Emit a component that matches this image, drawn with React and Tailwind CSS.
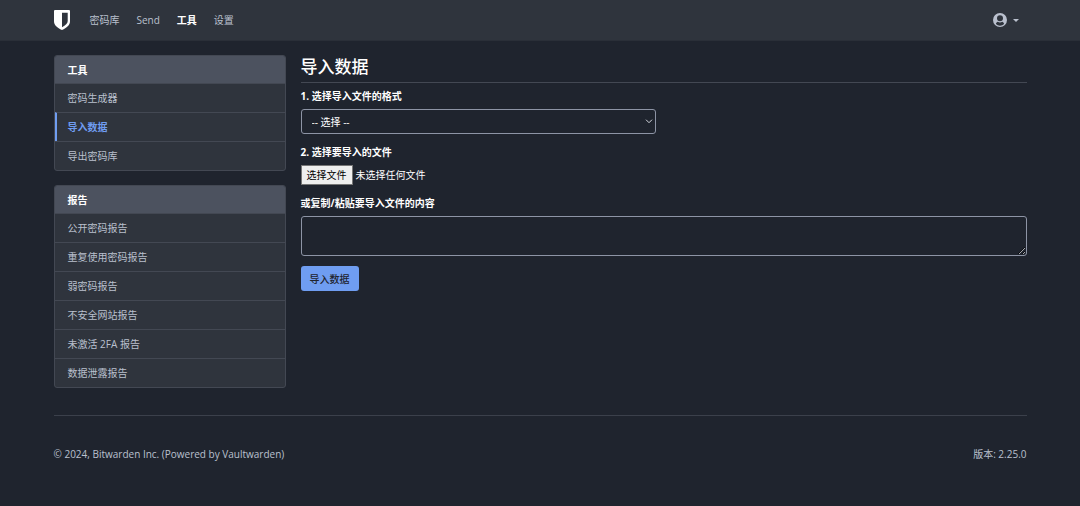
import React, { useRef, useState } from 'react';

const navLinks = ['密码库', 'Send', '工具', '设置'];

const toolLinks = ['密码生成器', '导入数据', '导出密码库'];

const reportLinks = [
  '公开密码报告',
  '重复使用密码报告',
  '弱密码报告',
  '不安全网站报告',
  '未激活 2FA 报告',
  '数据泄露报告',
];

function Logo() {
  return (
    <svg viewBox="0 0 16 20" className="w-4 h-5" fill="#fff" aria-hidden="true">
      <path
        fillRule="evenodd"
        d="M1 0h14a1 1 0 0 1 1 1v10.2c0 3.9-3.3 6.7-8 8.8-4.7-2.1-8-4.9-8-8.8V1a1 1 0 0 1 1-1zM8 2.8v14.4c3.6-1.9 5.7-3.7 5.7-6.2V2.8z"
      />
    </svg>
  );
}

function UserIcon() {
  return (
    <svg viewBox="0 0 14 14" className="w-3.5 h-3.5" aria-hidden="true">
      <path
        fill="currentColor"
        fillRule="evenodd"
        d="M7 0a7 7 0 1 1 0 14A7 7 0 0 1 7 0zM7 2.2a3 3 0 1 0 0 6 3 3 0 0 0 0-6zM2.900 10.900a5.700 5.700 0 0 0 8.200 0c-.4-1.200-1-1.900-1.900-2.100a4.300 4.300 0 0 1-4.400 0c-.9.2-1.500.9-1.900 2.100z"
      />
    </svg>
  );
}

function Navbar() {
  return (
    <header className="bg-[#2f343d] border-b border-[#2a2f38] text-[#bac0ce]">
      <div className="flex items-center justify-between w-full max-w-[973px] h-10 mx-auto">
        <div className="flex items-center">
          <a href="#" aria-label="Bitwarden" className="mr-5"><Logo /></a>
          <nav className="flex items-center gap-[17px]">
            {navLinks.map((label) => (
              <a key={label} href="#" className={label === '工具' ? 'font-bold text-white' : 'hover:text-white'}>{label}</a>
            ))}
          </nav>
        </div>
        <button type="button" aria-label="账户" className="flex items-center gap-1.5 mr-2">
          <UserIcon />
          <svg viewBox="0 0 6 3" className="w-1.5 h-[3px]" fill="currentColor" aria-hidden="true"><path d="M0 0h6L3 3z" /></svg>
        </button>
      </div>
    </header>
  );
}

function SideCard({ title, links, active }) {
  return (
    <div className="border border-[#434853] rounded-[3px] bg-[#2f343d] overflow-hidden">
      <div className="flex items-center h-[27px] px-[13px] bg-[#4c525f] text-white font-bold">{title}</div>
      {links.map((label) => (
        <a
          key={label}
          href="#"
          className={
            label === active
              ? 'flex items-center h-[29px] border-t border-t-[#434853] border-l-2 border-l-[#6f9df1] pl-[11px] pr-[13px] font-bold text-[#6f9df1]'
              : 'flex items-center h-[29px] border-t border-[#434853] px-[13px] hover:text-white'
          }
        >
          {label}
        </a>
      ))}
    </div>
  );
}

function ImportForm() {
  const fileRef = useRef(null);
  const [fileName, setFileName] = useState('');

  return (
    <form className="flex flex-col items-start text-white" onSubmit={(e) => e.preventDefault()}>
      <label htmlFor="format" className="font-bold leading-4 mt-[5px] mb-[5px]">1. 选择导入文件的格式</label>
      <div className="grid items-center w-full md:w-[49%]">
        <select id="format" className="appearance-none col-start-1 row-start-1 w-full h-[25px] px-2.5 border border-[#8d94a5] rounded-[3px] bg-[#1f242e] text-white">
          <option>-- 选择 --</option>
        </select>
        <svg viewBox="0 0 8 5" className="col-start-1 row-start-1 justify-self-end w-2 h-[5px] mr-[3px] pointer-events-none" fill="none" stroke="#d5d8df" aria-hidden="true">
          <path d="M1 .7l3 3 3-3" />
        </svg>
      </div>

      <label htmlFor="file" className="font-bold leading-4 mt-[10px] mb-[5px]">2. 选择要导入的文件</label>
      <div className="flex items-center gap-[3px]">
        <button type="button" onClick={() => fileRef.current.click()} className="h-5 px-[5px] border border-[#767676] bg-[#efefef] text-black">选择文件</button>
        <input id="file" ref={fileRef} type="file" className="hidden" onChange={(e) => setFileName(e.target.value)} />
        <span>{fileName || '未选择任何文件'}</span>
      </div>

      <label htmlFor="contents" className="font-bold leading-4 mt-[10px] mb-[5px]">或复制/粘贴要导入文件的内容</label>
      <textarea id="contents" className="block w-full h-10 px-2 py-1 border border-[#8d94a5] rounded-[3px] bg-[#1f242e]" />

      <button type="submit" className="h-[25px] px-[9px] mt-[10px] rounded-[3px] bg-[#6f9df1] text-[#1f242e] font-medium">导入数据</button>
    </form>
  );
}

function App() {
  return (
    <div className="min-h-screen bg-[#1f242e] text-[#bac0ce] text-[10px] leading-4 font-['Open_Sans','Noto_Sans_CJK_SC',sans-serif]">
      <Navbar />
      <div className="w-full max-w-[973px] mx-auto pt-[14px]">
        <div className="grid md:grid-cols-4 gap-[15px]">
          <aside className="flex flex-col gap-[14px]">
            <SideCard title="工具" links={toolLinks} active="导入数据" />
            <SideCard title="报告" links={reportLinks} />
          </aside>
          <main className="md:col-span-3">
            <h1 className="pb-1 border-b border-[#434853] text-[17px] leading-[23px] font-medium text-white">导入数据</h1>
            <ImportForm />
          </main>
        </div>
        <footer className="flex justify-between mt-[27px] pt-[30px] pb-11 border-t border-[#3b404b]">
          <span>© 2024, Bitwarden Inc. (Powered by Vaultwarden)</span>
          <span>版本: 2.25.0</span>
        </footer>
      </div>
    </div>
  );
}

export default App;
